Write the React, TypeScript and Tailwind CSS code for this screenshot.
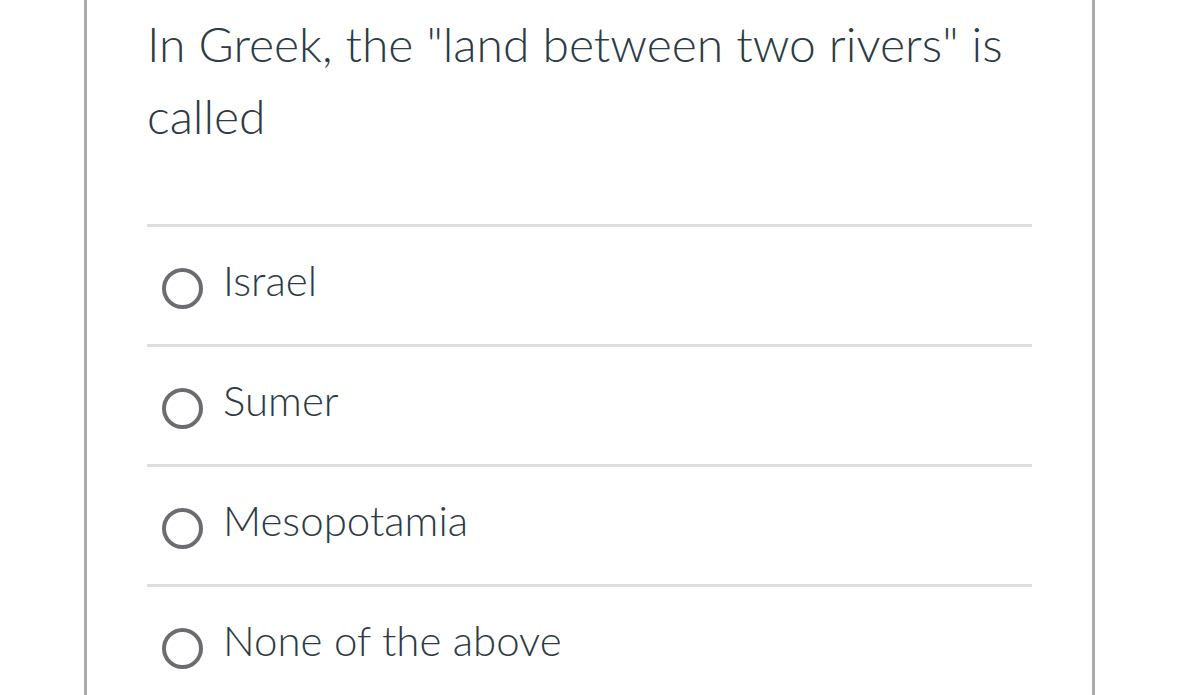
import React from "react";

const options = ["Israel", "Sumer", "Mesopotamia", "None of the above"];

export default function App() {
  return (
    <div className="w-[1179px] h-[695px] overflow-hidden bg-white" style={{ fontFamily: "Lato, 'Noto Sans', sans-serif" }}>
      <div className="ml-[84px] w-[1011px] h-[695px] border-x-[3px] border-[#aaaaaa] px-[60px] pt-[8px]">
        <div className="text-[48px] leading-[72px] font-light text-[#2d3b45]">
          In Greek, the "land between two rivers" is called
        </div>
        <div className="mt-[72px]">
          {options.map((o) => (
            <div key={o} className="h-[120px] border-t-[3px] border-[#dddddd] flex items-center pl-[15px]">
              <div className="w-[41px] h-[41px] mt-[5px] rounded-full border-[4px] border-[#6b6b70] shrink-0" />
              <div className="ml-[20px] mb-[11px] text-[42px] font-light text-[#2d3b45] leading-none">{o}</div>
            </div>
          ))}
        </div>
      </div>
    </div>
  );
}
